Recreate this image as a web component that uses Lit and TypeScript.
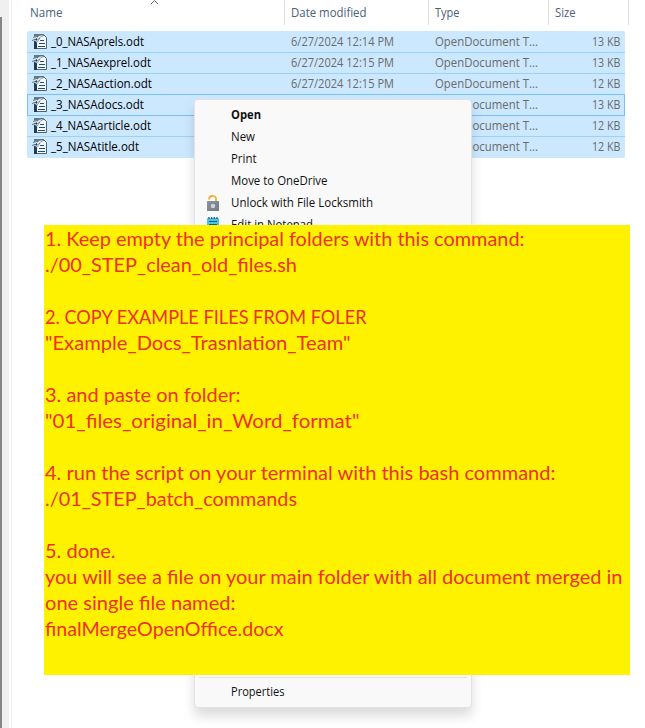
import { LitElement, html, css, svg } from "lit";
import { customElement, property } from "lit/decorators.js";

/** One line of text, stretched or narrowed horizontally to a set width. */
@customElement("fit-text")
class FitText extends LitElement {
  @property({ type: Number }) width = 0;
  static styles = css`
    :host { display: block; white-space: pre; }
    .ink { display: inline-block; transform-origin: 0 0; }
  `;
  render() {
    return html`<span class="ink"><slot></slot></span>`;
  }
  async firstUpdated() {
    this.fit();
    await document.fonts.ready;
    this.fit();
  }
  fit() {
    const ink = this.renderRoot.querySelector<HTMLElement>(".ink")!;
    const natural = parseFloat(getComputedStyle(ink).width);
    this.style.width = `${this.width}px`;
    if (natural > 0 && this.width > 0) ink.style.transform = `scaleX(${this.width / natural})`;
  }
}

const docIcon = svg`<svg class="doc" width="16" height="16" viewBox="0 0 16 16">
  <path d="M4.500 1.500H11.500L14.500 4.500V15.500H4.500Z" fill="#f2f8fb" stroke="#4a6475"/>
  <path d="M2 6H5V16H2Z" fill="#1f3d55"/>
  <path d="M2 1H10L12 2.500 6 5 2 4Z" fill="#5f7885"/>
  <path d="M1 4.500C3 3 4.500 3.200 5.500 4.200 7 2.300 9 1.700 12 2.200 9.500 3.200 7.500 4.500 6.200 6.800 4.800 4.900 3.200 4.300 1 4.500Z" fill="#f4f8fa" stroke="#48606f" stroke-width=".5"/>
  <path d="M0 7.500C2 6 3.500 6.300 4.400 7.400L8 5 5 9.500C3.500 7.900 2 7.500 0 7.500Z" fill="#dbe6ec" stroke="#48606f" stroke-width=".5"/>
  <path d="M8 7.500H12M7 10.500H13M6 13.500H13" stroke="#234f73"/>
</svg>`;

const lockIcon = svg`<svg class="ico" width="14" height="18" viewBox="0 0 14 18">
  <defs><linearGradient id="body" x1="0" y1="0" x2="1" y2="1"><stop offset="0" stop-color="#8d949b"/><stop offset="1" stop-color="#737b83"/></linearGradient></defs>
  <path d="M3 5.500V4.800A3.700 3.700 0 0 1 10 4V7" fill="none" stroke="#f5a623" stroke-width="1.600"/>
  <rect x="1" y="7" width="12" height="10" rx=".6" fill="url(#body)"/>
  <circle cx="7" cy="12" r="2.200" fill="#cfd6dd"/>
</svg>`;

const padIcon = svg`<svg class="ico" width="14" height="18" viewBox="0 0 14 18">
  <rect x="1" y="2" width="12" height="15" rx="1" fill="#4fc1e3"/>
  <path d="M3 1V3M5.700 1V3M8.300 1V3M11 1V3" stroke="#155b7c" stroke-width="1.200"/>
  <path d="M3 5.500H11M3 8.500H11M3 11.500H11" stroke="#0e5f86"/>
</svg>`;

const files: [string, number, string, string][] = [
  ["_0_NASAprels.odt", 93, "6/27/2024 12:14 PM", "13 KB"],
  ["_1_NASAexprel.odt", 100, "6/27/2024 12:15 PM", "13 KB"],
  ["_2_NASAaction.odt", 101, "6/27/2024 12:15 PM", "12 KB"],
  ["_3_NASAdocs.odt", 93, "6/27/2024 12:15 PM", "13 KB"],
  ["_4_NASAarticle.odt", 100, "6/27/2024 12:15 PM", "12 KB"],
  ["_5_NASAtitle.odt", 88, "6/27/2024 12:15 PM", "12 KB"],
];

const menu: [string, number, unknown][] = [
  ["Open", 30, ""],
  ["New", 24, ""],
  ["Print", 25.5, ""],
  ["Move to OneDrive", 96.500, ""],
  ["Unlock with File Locksmith", 142, lockIcon],
  ["Edit in Notepad", 82, padIcon],
];

const note: [string, number][] = [
  ["1. Keep empty the principal folders with this command:", 479.5],
  ["./00_STEP_clean_old_files.sh", 252],
  ["", 0],
  ["2. COPY EXAMPLE FILES FROM FOLER", 321.5],
  ["\"Example_Docs_Trasnlation_Team\"", 305.5],
  ["", 0],
  ["3. and paste on folder:", 195.5],
  ["\"01_files_original_in_Word_format\"", 314.5],
  ["", 0],
  ["4. run the script on your terminal with this bash command:", 510.5],
  ["./01_STEP_batch_commands", 252],
  ["", 0],
  ["5. done.", 70.5],
  ["you will see a file on your main folder with all document merged in", 577.5],
  ["one single file named:", 190.5],
  ["finalMergeOpenOffice.docx", 238.5],
];

@customElement("app-root")
class AppRoot extends LitElement {
  static styles = css`
    :host { display: block; position: relative; width: 645px; height: 728px; overflow: hidden; background: #fff; font: 12px/21px "Open Sans", "Noto Sans", sans-serif; color: #111; }
    .window { display: flex; height: 728px; }
    .gutter { width: 9px; background: #f0f0f0; box-sizing: border-box; padding-top: 17px; }
    .edge { width: 2px; height: 711px; background: #858585; }
    .pane { margin-left: 2px; border-left: 1px solid #f3f3f3; padding-left: 15px; flex: 1; }
    .head { display: grid; grid-template-columns: 258px 144px 120px 80px; height: 25px; margin-bottom: 6px; color: #4c607a; position: relative; }
    .head > div { border-right: 1px solid #e2e2e2; padding: 2px 0 0 6px; }
    .head > div:first-child { padding-left: 3px; }
    .sort { position: absolute; left: 123px; top: 0; }
    .rows { width: 598px; }
    .row { display: grid; grid-template-columns: 24px 240px 144px 157px auto; height: 20px; line-height: 19px; background: #cce8ff; border-top: 1px solid #99d1ff; color: #6b6b6b; }
    .row:first-child { border-top-color: #cce8ff; border-radius: 2px 2px 0 0; }
    .row:last-child { height: 21px; border-radius: 0 0 2px 2px; }
    .row.focus { border-color: #77bfff; box-shadow: inset 1px 0 #77bfff, inset -1px 0 #77bfff; }
    .row.focus + .row { border-top-color: #77bfff; }
    .name { color: #000; }
    .doc { display: block; margin: 1px 0 0 5px; }
    .menu { position: absolute; left: 194px; top: 99px; width: 278px; height: 609px; box-sizing: border-box; background: #f9f9f9; border: 1px solid #e2e2e2; border-radius: 4px; box-shadow: 0 8px 12px rgba(0,0,0,.14); padding-top: 4px; display: flex; flex-direction: column; }
    .item { display: grid; grid-template-columns: 36px auto; height: 22px; line-height: 22px; }
    .item.bold { font-weight: 700; }
    .ico { display: block; margin: 2px 0 0 11px; }
    .last { margin: auto 4px 0; height: 29px; border-top: 1px solid #e2e2e2; padding-left: 32px; line-height: 28px; }
    .note { position: absolute; left: 44px; top: 225px; width: 586px; height: 450px; box-sizing: border-box; background: #fff200; color: #ed3123; padding: 1px 0 0 1px; font: 19.500px/26px Lato, sans-serif; }
    .note fit-text { height: 26.040px; }
  `;
  render() {
    return html`
      <div class="window">
        <div class="gutter"><div class="edge"></div></div>
        <div class="pane">
          <div class="head">
            <div><fit-text width="32.5">Name</fit-text></div>
            <div><fit-text width="75.5">Date modified</fit-text></div>
            <div><fit-text width="24.5">Type</fit-text></div>
            <div><fit-text width="20.5">Size</fit-text></div>
            <svg class="sort" width="9" height="5" viewBox="0 0 9 5"><path d="M.800 4.200 4.500.500 8.200 4.200" fill="none" stroke="#666"/></svg>
          </div>
          <div class="rows">
            ${files.map(([name, w, date, size], i) => html`
              <div class="row ${i === 3 ? "focus" : ""}">
                ${docIcon}
                <fit-text class="name" .width=${w}>${name}</fit-text>
                <fit-text width="103">${date}</fit-text>
                <fit-text width="103">OpenDocument T...</fit-text>
                <fit-text width="28.5">${size}</fit-text>
              </div>`)}
          </div>
        </div>
      </div>
      <div class="menu">
        ${menu.map(([label, w, icon], i) => html`
          <div class="item ${i === 0 ? "bold" : ""}"><span>${icon}</span><fit-text .width=${w}>${label}</fit-text></div>`)}
        <div class="last"><fit-text width="53.5">Properties</fit-text></div>
      </div>
      <div class="note">${note.map(([line, w]) => html`<fit-text .width=${w}>${line}</fit-text>`)}</div>
    `;
  }
}
